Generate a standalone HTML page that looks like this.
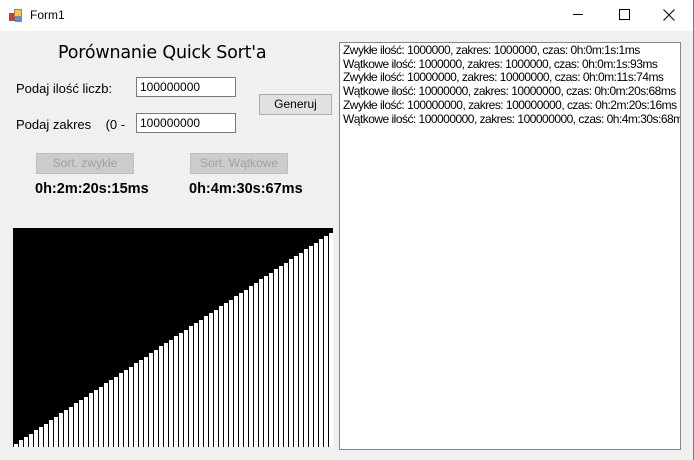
<!DOCTYPE html>
<html><head><meta charset="utf-8"><style>
*{margin:0;padding:0;box-sizing:border-box}
body{width:694px;height:460px;overflow:hidden;background:#f0f0f0;font-family:"Liberation Sans",sans-serif;position:relative;}
.abs{position:absolute}
.tb{left:0;top:0;width:694px;height:31px;background:#fff}
.lbl{font-size:13px;color:#000}
.inp{background:#fff;border:1px solid #7a7a7a;font-size:12px;color:#000;padding:2px 0 0 3px}
.btn{border:1px solid #adadad;background:#e1e1e1;font-size:12px;text-align:center;line-height:19px}
.dis{border:1px solid #bfbfbf;background:#cccccc;color:#a0a0a0}
.time{font-size:14.5px;font-weight:bold}
.lb{left:339px;top:42px;width:342px;height:408px;background:#fff;border:1px solid #828790;font-size:12px;line-height:13.7px;padding:1px 0 0 3px;white-space:nowrap;overflow:hidden;color:#000;letter-spacing:-0.52px}
</style></head><body>
<div class="abs tb"></div>
<div class="abs" style="right:0;top:0;width:1px;height:460px;background:#777"></div>
<svg class="abs" style="left:9px;top:9px" width="16" height="14"><rect x="0.5" y="4.5" width="5" height="7" fill="#d33" stroke="#666"/><rect x="5.5" y="0.5" width="7" height="7" fill="#f5c842" stroke="#a77"/><rect x="6" y="8" width="7" height="5" fill="#5a8fd8"/></svg>
<div class="abs" style="left:30px;top:8px;font-size:12px">Form1</div>
<div class="abs" style="left:573px;top:14px;width:10px;height:1px;background:#000"></div>
<div class="abs" style="left:619px;top:9px;width:11px;height:11px;border:1px solid #000"></div>
<svg class="abs" style="left:663px;top:9px" width="12" height="12"><path d="M0.5 0.5L11.5 11.5M11.5 0.5L0.5 11.5" stroke="#000" stroke-width="1"/></svg>
<div class="abs" style="left:58px;top:43px;font-size:17.5px;font-family:'DejaVu Sans',sans-serif;letter-spacing:-0.2px">Porównanie Quick Sort'a</div>
<div class="abs lbl" style="left:16px;top:81px">Podaj ilość liczb:</div>
<div class="abs lbl" style="left:16px;top:117px">Podaj zakres&nbsp;&nbsp;&nbsp;&nbsp;(0 -</div>
<div class="abs inp" style="left:136px;top:77px;width:100px;height:20px">100000000</div>
<div class="abs inp" style="left:136px;top:113px;width:100px;height:20px">100000000</div>
<div class="abs btn" style="left:259px;top:94px;width:73px;height:21px">Generuj</div>
<div class="abs btn dis" style="left:36px;top:153px;width:98px;height:21px">Sort. zwykłe</div>
<div class="abs btn dis" style="left:190px;top:153px;width:98px;height:21px">Sort. Wątkowe</div>
<div class="abs time" style="left:35px;top:181px">0h:2m:20s:15ms</div>
<div class="abs time" style="left:189px;top:181px">0h:4m:30s:67ms</div>
<svg class="abs" style="left:13px;top:228px" width="320" height="219" shape-rendering="crispEdges">
<rect width="320" height="219" fill="#000"/>
<g fill="#fff">
<rect x="1" y="216" width="4" height="3"/><rect x="6" y="212" width="4" height="7"/><rect x="11" y="209" width="4" height="10"/><rect x="16" y="206" width="4" height="13"/><rect x="21" y="202" width="4" height="17"/><rect x="26" y="199" width="4" height="20"/><rect x="31" y="196" width="4" height="23"/><rect x="36" y="192" width="4" height="27"/><rect x="41" y="189" width="4" height="30"/><rect x="46" y="185" width="4" height="34"/><rect x="51" y="182" width="4" height="37"/><rect x="56" y="179" width="4" height="40"/><rect x="61" y="175" width="4" height="44"/><rect x="66" y="172" width="4" height="47"/><rect x="71" y="169" width="4" height="50"/><rect x="76" y="165" width="4" height="54"/><rect x="81" y="162" width="4" height="57"/><rect x="86" y="159" width="4" height="60"/><rect x="91" y="155" width="4" height="64"/><rect x="96" y="152" width="4" height="67"/><rect x="101" y="149" width="4" height="70"/><rect x="106" y="145" width="4" height="74"/><rect x="111" y="142" width="4" height="77"/><rect x="116" y="139" width="4" height="80"/><rect x="121" y="135" width="4" height="84"/><rect x="126" y="132" width="4" height="87"/><rect x="131" y="129" width="4" height="90"/><rect x="136" y="125" width="4" height="94"/><rect x="141" y="122" width="4" height="97"/><rect x="146" y="118" width="4" height="101"/><rect x="151" y="115" width="4" height="104"/><rect x="156" y="112" width="4" height="107"/><rect x="161" y="108" width="4" height="111"/><rect x="166" y="105" width="4" height="114"/><rect x="171" y="102" width="4" height="117"/><rect x="176" y="98" width="4" height="121"/><rect x="181" y="95" width="4" height="124"/><rect x="186" y="92" width="4" height="127"/><rect x="191" y="88" width="4" height="131"/><rect x="196" y="85" width="4" height="134"/><rect x="201" y="82" width="4" height="137"/><rect x="206" y="78" width="4" height="141"/><rect x="211" y="75" width="4" height="144"/><rect x="216" y="72" width="4" height="147"/><rect x="221" y="68" width="4" height="151"/><rect x="226" y="65" width="4" height="154"/><rect x="231" y="62" width="4" height="157"/><rect x="236" y="58" width="4" height="161"/><rect x="241" y="55" width="4" height="164"/><rect x="246" y="51" width="4" height="168"/><rect x="251" y="48" width="4" height="171"/><rect x="256" y="45" width="4" height="174"/><rect x="261" y="41" width="4" height="178"/><rect x="266" y="38" width="4" height="181"/><rect x="271" y="35" width="4" height="184"/><rect x="276" y="31" width="4" height="188"/><rect x="281" y="28" width="4" height="191"/><rect x="286" y="25" width="4" height="194"/><rect x="291" y="21" width="4" height="198"/><rect x="296" y="18" width="4" height="201"/><rect x="301" y="15" width="4" height="204"/><rect x="306" y="11" width="4" height="208"/><rect x="311" y="8" width="4" height="211"/><rect x="316" y="5" width="4" height="214"/>
</g></svg>
<div class="abs lb">Zwykłe ilość: 1000000, zakres: 1000000, czas: 0h:0m:1s:1ms<br>Wątkowe ilość: 1000000, zakres: 1000000, czas: 0h:0m:1s:93ms<br>Zwykłe ilość: 10000000, zakres: 10000000, czas: 0h:0m:11s:74ms<br>Wątkowe ilość: 10000000, zakres: 10000000, czas: 0h:0m:20s:68ms<br>Zwykłe ilość: 100000000, zakres: 100000000, czas: 0h:2m:20s:16ms<br>Wątkowe ilość: 100000000, zakres: 100000000, czas: 0h:4m:30s:68ms</div>
</body></html>
